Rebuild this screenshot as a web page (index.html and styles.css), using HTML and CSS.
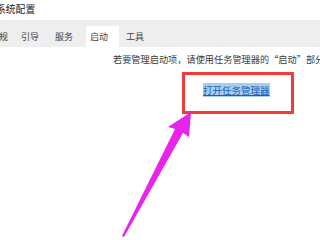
FILE: index.html
```html
<!DOCTYPE html>
<html lang="zh">
<head>
<meta charset="utf-8">
<link rel="stylesheet" href="styles.css">
</head>
<body>
<div class="window">
  <div class="title">系统配置</div>
  <div class="tabs">
    <div class="tab first">常规</div>
    <div class="tab t-boot">引导</div>
    <div class="tab t-svc">服务</div>
    <div class="tab active">启动</div>
    <div class="tab t-tools">工具</div>
  </div>
  <div class="content">
    <div class="info">若要管理启动项，请使用任务管理器的“启动”部分。</div>
    <div class="linkrow"><span class="link">打开任务管理器</span></div>
  </div>
  <div class="highlight"></div>
  <svg class="arrow" width="320" height="240" viewBox="0 0 320 240">
    <polygon points="191,112 189,137 183,133 124,237 122,236 175,129 168,127" fill="#e824ea"/>
  </svg>
</div>
</body>
</html>
```
FILE: styles.css
```css
html, body {
  margin: 0;
  padding: 0;
  background: #ffffff;
}
body {
  font-family: "Noto Sans CJK SC", "Noto Sans", sans-serif;
  color: #333333;
  width: 320px;
  height: 240px;
  overflow: hidden;
}
.window {
  position: relative;
  width: 320px;
  height: 240px;
  overflow: hidden;
}
.title {
  height: 20px;
  font-size: 9.8px;
  line-height: 18px;
  margin-left: -4px;
  color: #222;
  white-space: nowrap;
}
.tabs {
  display: flex;
  height: 27px;
  background: #eeeeee;
  align-items: flex-end;
}
.tab {
  height: 21px;
  font-size: 9px;
  line-height: 21px;
  color: #444;
  box-sizing: border-box;
  white-space: nowrap;
  overflow: hidden;
  flex: none;
}
.tab.first {
  width: 13px;
  text-indent: -10px;
}
.tab.t-boot {
  width: 34px;
  padding-left: 8px;
}
.tab.t-svc {
  width: 39px;
  padding-left: 8px;
}
.tab.active {
  background: #ffffff;
  width: 33px;
  padding-left: 4px;
}
.tab.t-tools {
  width: 34px;
  padding-left: 7px;
}
.content {
  padding-top: 6px;
}
.info {
  font-size: 9.2px;
  line-height: 12px;
  white-space: nowrap;
  padding-left: 113px;
  color: #3a3a3a;
}
.linkrow {
  margin-top: 19px;
  padding-left: 203px;
  font-size: 9.5px;
  line-height: 12px;
}
.link {
  color: #1a5fb4;
  background: #a8cdf0;
  text-decoration: underline;
  white-space: nowrap;
}
.highlight {
  position: absolute;
  left: 182px;
  top: 72px;
  width: 106px;
  height: 36px;
  border: 3px solid #f23a3a;
}
.arrow {
  position: absolute;
  left: 0;
  top: 0;
}
```
